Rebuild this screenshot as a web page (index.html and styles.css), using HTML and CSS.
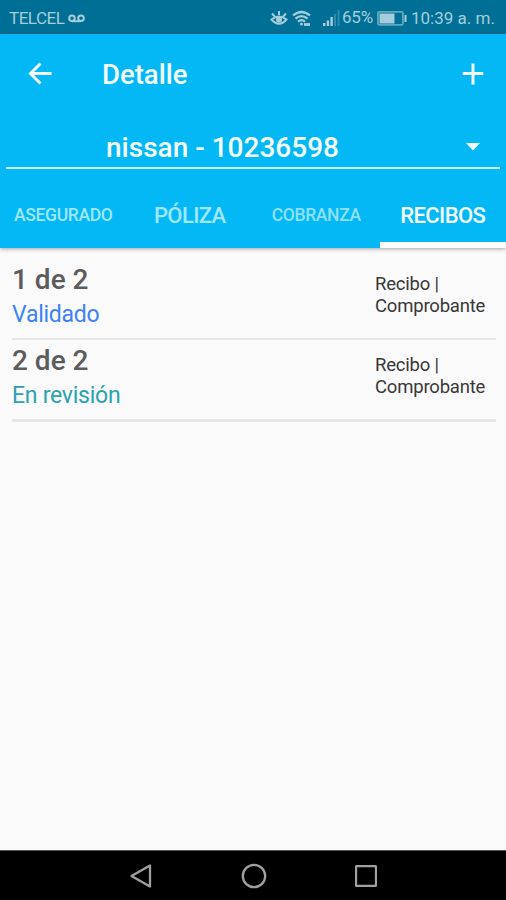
FILE: index.html
```html
<!DOCTYPE html>
<html lang="es">
<head>
<meta charset="utf-8">
<title>Detalle</title>
<link rel="stylesheet" href="styles.css">
</head>
<body>
<div class="status">
  <span class="carrier">TELCEL</span>
  <svg class="voicemail" width="17" height="9" viewBox="0 0 17 9"><g fill="none" stroke="currentColor" stroke-width="2"><circle cx="4" cy="4.2" r="2.8"/><circle cx="13" cy="4.2" r="2.8"/><path d="M4 7.2h9"/></g></svg>
  <svg class="eye" width="18" height="16" viewBox="0 0 18 16"><g fill="none" stroke="currentColor" stroke-width="2"><path d="M1.500 9.500Q9 3.500 16.500 9.500Q9 18 1.500 9.500ZM2 3.500l2.800 3M9 1v4M16 3.500l-2.800 3"/></g><circle cx="9" cy="9.800" r="3" fill="currentColor"/></svg>
  <svg class="wifi" width="19" height="17" viewBox="0 0 19 17"><g fill="none" stroke="currentColor" stroke-width="2.200"><path d="M1 5.500Q9.500-1.500 18 5.500M3.500 8.700Q9.500 3.500 15.500 8.700M6 11.700Q9.500 8.500 13 11.700"/><path d="M12 14.500h6" stroke-width="2.800"/></g><circle cx="9.500" cy="14" r="1.500" fill="currentColor"/></svg>
  <svg class="signal" width="17" height="16" viewBox="0 0 17 16" fill="currentColor"><path d="M0 13h2.400v3H0zM3.700 10.500h2.400V16H3.700zM7.400 7h2.400v9H7.400z"/><path d="M11 4h2v12h-2zM14.700 0h1.800v16h-1.800z" opacity=".3"/></svg>
  <span class="percent">65%</span>
  <svg class="battery" width="30" height="15" viewBox="0 0 30 15"><rect x=".9" y=".9" width="25" height="13" rx="1.500" fill="none" stroke="currentColor" stroke-width="1.800" opacity=".6"/><path d="M2.500 2.500h15v10h-15zM27.500 4h2v7h-2z" fill="currentColor"/></svg>
  <span class="time">10:39 a. m.</span>
</div>
<header>
  <div class="toolbar">
    <svg class="back" width="24" height="24" viewBox="0 0 24 24" fill="none" stroke="currentColor" stroke-width="3"><path d="M23.500 11.500H3M12.500 1.500L2.500 11.500l10 10"/></svg>
    <h1>Detalle</h1>
    <svg class="add" width="22" height="22" viewBox="0 0 22 22" fill="none" stroke="currentColor" stroke-width="3"><path d="M11 .5v21M.7 10.500h20.600"/></svg>
  </div>
  <div class="spinner">
    <span>nissan - 10236598</span>
    <svg width="14" height="8" viewBox="0 0 14 8"><path d="M0 0h14L7 7.500z" fill="currentColor"/></svg>
  </div>
  <nav>
    <span class="tab small">ASEGURADO</span>
    <span class="tab">PÓLIZA</span>
    <span class="tab small cobranza">COBRANZA</span>
    <span class="tab active">RECIBOS</span>
  </nav>
</header>
<main>
  <div class="row">
    <div><div class="title">1 de 2</div><div class="state valid">Validado</div></div>
    <div class="links">Recibo |<br>Comprobante</div>
  </div>
  <div class="row">
    <div><div class="title">2 de 2</div><div class="state review">En revisión</div></div>
    <div class="links">Recibo |<br>Comprobante</div>
  </div>
</main>
<footer>
  <svg width="22" height="24" viewBox="0 0 22 24"><path d="M20 1.500v21L1.500 12z"/></svg>
  <svg width="26" height="26" viewBox="0 0 26 26"><circle cx="13" cy="13" r="11.200"/></svg>
  <svg width="22" height="22" viewBox="0 0 22 22"><rect x="1" y="1" width="20" height="20" rx="1"/></svg>
</footer>
</body>
</html>
```
FILE: styles.css
```css
* { box-sizing: border-box; }
body { margin: 0; width: 506px; height: 900px; display: flex; flex-direction: column; overflow: hidden; background: #fafafa; font-family: Roboto, "Liberation Sans", sans-serif; white-space: nowrap; }
svg { display: block; flex: none; }
.status { height: 34px; flex: none; display: flex; align-items: center; padding: 2px 0 0 9px; background: #006f96; color: #a5cddb; font-size: 17px; }
.carrier { width: 57px; letter-spacing: -.5px; font-size: 17px; }
.voicemail { margin-left: 2px; }
.eye { margin-left: 185px; }
.wifi { margin-left: 4px; }
.signal { margin-left: 12px; }
.percent { width: 31px; margin-left: 2px; letter-spacing: -.2px; position: relative; top: -1px; }
.battery { margin-left: 4px; }
.time { margin-left: 4px; }
header { height: 214px; flex: none; background: #03b8f5; color: #f3fcff; box-shadow: 0 1px 4px rgba(0,0,0,.35); z-index: 1; }
.toolbar { height: 80px; display: flex; align-items: center; padding: 0 22px 0 28px; }
h1 { margin: 2px auto 0 50px; font-size: 27.500px; line-height: 32px; font-weight: 500; }
.spinner { height: 55px; margin: 0 6px; border-bottom: 2px solid #c9f1ff; display: flex; align-items: center; justify-content: space-between; padding: 13px 20px 0 100px; font-size: 28px; font-weight: 500; }
nav { height: 79px; display: grid; grid-template-columns: repeat(4, 1fr); }
.tab { display: flex; align-items: center; justify-content: center; padding-top: 13px; font-size: 22px; letter-spacing: -.6px; font-weight: 500; color: #a0e6ff; }
.small { font-size: 17.500px; letter-spacing: -.35px; }
.cobranza { color: #90e0fd; }
.active { color: #f3fcff; border-bottom: 6px solid #fff; padding-top: 19px; }
main { flex: 1; padding: 11px 10px 0 12px; }
.row { height: 81px; border-bottom: 2px solid #e6e6e6; display: flex; justify-content: space-between; }
.row + .row { height: 82px; border-bottom-width: 3px; }
.title { margin-top: 3px; font-size: 28px; line-height: 35px; font-weight: 500; color: #5c5c5c; }
.state { font-size: 23px; letter-spacing: -.25px; line-height: 36px; }
.valid { color: #3c82f6; }
.review { color: #2ca2b0; }
.links { width: 121px; padding-top: 15px; font-size: 18.500px; letter-spacing: -.2px; line-height: 21.500px; color: #383838; }
footer { height: 50px; flex: none; border-top: 1px solid #555; background: #000; display: flex; justify-content: space-between; align-items: center; padding: 0 129px 0 130px; }
footer svg { fill: none; stroke: #a0a0a0; stroke-width: 2.300; stroke-linejoin: round; }
```
